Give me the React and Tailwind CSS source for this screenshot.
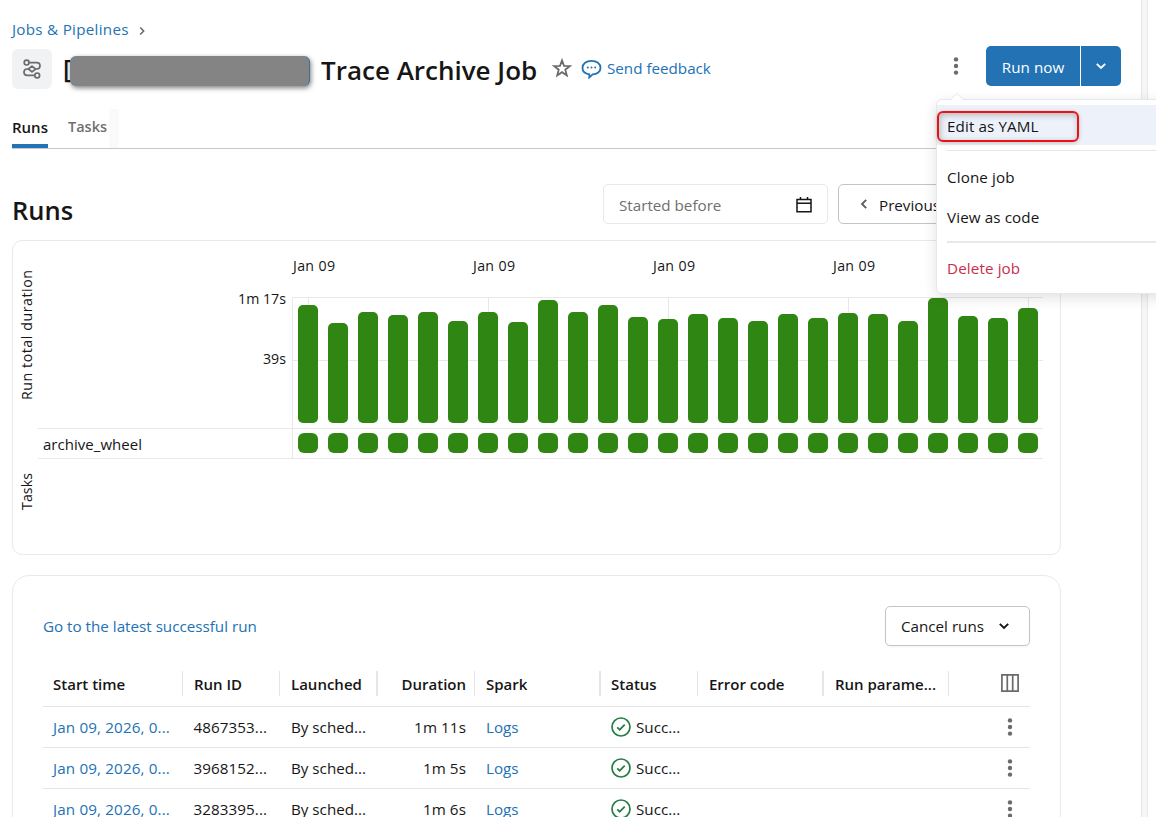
import React from "react";

const durations = [
  118, 100, 111, 108, 111, 102, 111, 101, 123, 111, 118, 106, 104, 109, 105,
  102, 109, 105, 110, 109, 102, 125, 107, 105, 115,
];

const runs = [
  { start: "Jan 09, 2026, 0...", id: "4867353...", duration: "1m 11s" },
  { start: "Jan 09, 2026, 0...", id: "3968152...", duration: "1m 5s" },
  { start: "Jan 09, 2026, 0...", id: "3283395...", duration: "1m 6s" },
];

const columns =
  "grid grid-cols-[140px_97px_98px_97px_126px_97px_126px_125px_81px]";

const Kebab = ({ className }) => (
  <svg className={className} width="6" height="18" viewBox="0 0 6 18">
    <circle cx="3" cy="2.4" r="2.2" fill="currentColor" />
    <circle cx="3" cy="9" r="2.2" fill="currentColor" />
    <circle cx="3" cy="15.6" r="2.2" fill="currentColor" />
  </svg>
);

const Chevron = ({ className }) => (
  <svg className={className} width="12" height="8" viewBox="0 0 12 8" fill="none">
    <path d="M1.8 1.8 6 6l4.2-4.2" stroke="currentColor" strokeWidth="1.9" />
  </svg>
);

const JobIcon = () => (
  <svg width="20" height="20" viewBox="0 0 20 20" fill="none" stroke="#6b6b6b" strokeWidth="1.7">
    <circle cx="4.6" cy="3.6" r="2.4" />
    <path d="M7 3.600h7.800a3.200 3.200 0 0 1 3.200 3.200 3.200 3.200 0 0 1-3.200 3.200h-1.400" />
    <path d="m10 7.200 3.600 2.800-3.600 2.800L6.400 10z" strokeLinejoin="round" />
    <path d="M6.600 10H5.200A3.200 3.200 0 0 0 2 13.200a3.200 3.200 0 0 0 3.200 3.200h7.600" />
    <circle cx="15.2" cy="16.4" r="2.4" />
  </svg>
);

const Header = () => (
  <header className="flex h-10 mt-[9px]">
    <div className="w-10 h-10 flex items-center justify-center rounded-md bg-[#f1f2f4]">
      <JobIcon />
    </div>
    <h1 className="ml-[11px] flex items-center whitespace-nowrap text-[26px] font-semibold text-[#161616]">
      <span className="w-[7px] text-[25px]">[</span>
      <span className="w-60 h-[30px] mt-[3px] rounded-[6px] bg-[#848484] border-r border-[#3d6d99] shadow-[1px_2px_5px_rgba(0,0,0,0.5)] z-10" />
      <span className="ml-[11px] mt-0.5 w-[217px]">Trace Archive Job</span>
    </h1>
    <svg className="ml-[14px] mt-[9px]" width="20" height="20" viewBox="0 0 20 20" fill="none">
      <path
        d="m10 2.400 2 5.400 5.800.3-4.500 3.600 1.500 5.700-4.800-3.200-4.800 3.200 1.500-5.700L2.200 8.100l5.800-.3z"
        stroke="#6b6b6b"
        strokeWidth="1.8"
      />
    </svg>
    <a className="ml-[9px] mt-[9px] flex h-6 items-center text-[#2272b4]">
      <svg className="-mt-[3px]" width="22" height="22" viewBox="0 0 22 22" fill="none">
        <path
          d="M8.300 16.300C4.200 15.600 1.500 13.200 1.500 9.900 1.500 5.700 5.300 2.900 10.500 2.900s9 2.800 9 7c0 3.700-3.300 6.400-7.800 6.500l-3.400 3z"
          stroke="currentColor"
          strokeWidth="1.8"
        />
        <circle cx="6.800" cy="9.500" r="1" fill="currentColor" />
        <circle cx="10.500" cy="9.500" r="1" fill="currentColor" />
        <circle cx="14.200" cy="9.500" r="1" fill="currentColor" />
      </svg>
      <span className="ml-1 -mt-[3px]">Send feedback</span>
    </a>
    <Kebab className="ml-auto mt-2 text-[#6b6b6b]" />
    <div className="ml-[27px] -mt-[3px] flex h-10 w-[135px] rounded-[5px] bg-[#2272b4] text-white">
      <button className="w-[95px] border-r border-white pt-0.5 tracking-[0.05px]">Run now</button>
      <button className="flex flex-1 items-center justify-center">
        <Chevron />
      </button>
    </div>
  </header>
);

const Tabs = () => (
  <nav className="mt-5 flex h-10 border-b border-[#c9c9c9] font-semibold">
    <a className="h-[39px] w-9 border-b-4 border-[#2272b4] pt-[7px] text-[15px] text-[#161616]">
      Runs
    </a>
    <a className="ml-5 w-[38px] pt-[7px] text-[14.500px] text-[#6f6f6f]">Tasks</a>
    <span className="ml-[3px] w-2.5 bg-[#fafafa]" />
  </nav>
);

const Toolbar = () => (
  <div className="mt-[35px] flex h-10">
    <h2 className="w-[591px] pt-1.5 text-[25.500px] leading-10 font-semibold text-[#161616]">
      Runs
    </h2>
    <div className="flex w-[225px] items-center justify-between rounded-[5px] border border-[#e8e9ee] pl-[15px] pr-[14px] text-[#6f6f6f]">
      <span className="pt-0.5">Started before</span>
      <svg className="mt-0.5" width="18" height="18" viewBox="0 0 18 18" fill="none" stroke="#161616" strokeWidth="1.5">
        <path d="M2 3.500h14v12.200H2zM2 7.300h14M5.500 1v3M12.500 1v3" />
      </svg>
    </div>
    <button className="ml-2.5 flex w-[140px] items-center rounded-[5px] border border-[#c4c4c4] pl-[18px] text-[#161616]">
      <Chevron className="ml-px rotate-90 text-[#5f5f5f]" />
      <span className="ml-[9px] pt-0.5">Previous</span>
    </button>
  </div>
);

const RunChart = () => (
  <section className="mt-4 flex h-[315px] w-[1049px] rounded-[10px] border border-[#e8e9ee]">
    <svg width="1047" height="313" viewBox="13 241 1047 313" fill="#161616" fontSize="14.2">
      <g stroke="#e8e8e8" fill="none">
        <path d="M292.500 458V297.500H1043M292 360.500h751M38 428.500h1005M38 458.500h1005" />
        {[308, 488, 668, 848, 1028].map((x) => (
          <path key={x} d={`M${x + 0.5} 297V423`} />
        ))}
      </g>
      {[314, 494, 674, 854].map((x) => (
        <text key={x} x={x} y="271" textAnchor="middle" textLength="42">
          Jan 09
        </text>
      ))}
      <text x="286" y="304" textAnchor="end" textLength="48">1m 17s</text>
      <text x="286" y="364" textAnchor="end" textLength="23">39s</text>
      <text x="43" y="450" fontSize="15" textLength="99">archive_wheel</text>
      <text transform="translate(32 400) rotate(-90)" textLength="130">Run total duration</text>
      <text transform="translate(32 510) rotate(-90)" textLength="37">Tasks</text>
      {durations.map((h, i) => (
        <g key={i} fill="#308613">
          <rect x={298 + i * 30} y={423 - h} width="20" height={h} rx="5" />
          <rect x={298 + i * 30} y="433" width="20" height="20" rx="6" />
        </g>
      ))}
    </svg>
  </section>
);

const HeadCell = ({ children, className = "border-r pl-[11px]" }) => (
  <div className={`h-[25px] border-[#e4e5e8] leading-[26px] ${className}`}>
    {children}
  </div>
);

const RunTable = () => (
  <section className="mt-5 h-[300px] w-[1049px] rounded-[17px] border border-[#e8e9ee] px-[30px] pt-[30px]">
    <div className="flex h-10 items-center justify-between">
      <a className="text-[#2272b4]">Go to the latest successful run</a>
      <button className="flex h-10 w-[145px] items-center rounded-[5px] border border-[#c4c4c4] pl-[15px] shadow-xs">
        <span className="w-[97px] text-left">Cancel runs</span>
        <Chevron />
      </button>
    </div>
    <div className={`${columns} mt-[25px] h-9 border-b border-[#e4e5ea] text-[15px] font-semibold whitespace-nowrap`}>
      <HeadCell className="border-r pl-2.5">Start time</HeadCell>
      <HeadCell>Run ID</HeadCell>
      <HeadCell className="border-r-2 pl-[11px]">Launched</HeadCell>
      <HeadCell className="border-r pr-2 text-right">Duration</HeadCell>
      <HeadCell className="border-r-2 pl-[11px]">Spark</HeadCell>
      <HeadCell className="border-r pl-2.5">Status</HeadCell>
      <HeadCell className="border-r-2 pl-[11px]">Error code</HeadCell>
      <HeadCell>Run parame...</HeadCell>
      <svg className="ml-[52px] mt-[3px]" width="18" height="18" viewBox="0 0 18 18" fill="none" stroke="#6b6b6b" strokeWidth="1.7">
        <path d="M.9.9h16.200v16.200H.9zM6.300 1v16M11.700 1v16" />
      </svg>
    </div>
    {runs.map((run) => (
      <div key={run.id} className={`${columns} h-[41px] border-b border-[#e4e5ea] leading-10 whitespace-nowrap`}>
        <a className="pl-2.5 tracking-[0.15px] text-[#2272b4]">{run.start}</a>
        <span className="pl-[10.500px] tracking-[0.08px]">{run.id}</span>
        <span className="pl-[11px]">By sched...</span>
        <span className="pr-[9px] text-right tracking-[0.1px]">{run.duration}</span>
        <a className="pl-[11px] text-[#2272b4]">Logs</a>
        <span className="flex items-start pl-2.5">
          <svg className="mt-2.5" width="20" height="20" viewBox="0 0 20 20" fill="none" stroke="#277c43" strokeWidth="1.7">
            <circle cx="10" cy="10" r="9" />
            <path d="m6.200 10.300 2.500 2.400 5-5" />
          </svg>
          <span className="ml-[5px]">Succ...</span>
        </span>
        <span />
        <span />
        <Kebab className="ml-[58px] mt-[11px] text-[#6b6b6b]" />
      </div>
    ))}
  </section>
);

const JobMenu = () => (
  <div className="absolute top-[99px] left-[936px] z-20 h-[195px] w-[240px] rounded-md border border-[#e6e7ea] bg-white pt-[5px] text-[#161616] tracking-[0.12px] shadow-[0_4px_14px_rgba(0,0,0,0.12)]">
    <svg className="absolute -top-[7px] left-3" width="16" height="8" viewBox="0 0 16 8">
      <path d="M1 7.500 7 1.300q1-1 2 0L15 7.500" fill="#fff" stroke="#e6e7ea" />
    </svg>
    <div className="relative h-10 bg-[#edf2fa] pl-2.5 leading-[43px]">
      Edit as YAML
      <span className="absolute top-1.5 left-0 h-[31px] w-[142px] rounded-[6px] border-2 border-[#ee1111] shadow-[inset_1px_2px_6px_rgba(0,0,0,0.25),0_1px_4px_rgba(0,0,0,0.2)]" />
    </div>
    <div className="mt-[5px] ml-2.5 h-px bg-[#e6e6e6]" />
    <div className="mt-1.5 h-10 pl-2.5 leading-[41px]">Clone job</div>
    <div className="h-10 pl-2.5 leading-[41px]">View as code</div>
    <div className="mt-1 ml-2.5 h-0.5 bg-[#e8e8e8]" />
    <div className="mt-[5px] h-10 pl-2.5 leading-[41px] text-[#c82d4c]">Delete job</div>
  </div>
);

const App = () => {
  return (
    <div className="relative flex h-[817px] w-[1156px] overflow-hidden bg-white font-['Open_Sans',sans-serif] text-[15.200px] text-[#161616]">
      <main className="w-[1141px] shrink-0 pl-3 pr-5">
        <div className="flex h-10 items-center pt-[19px] text-[#2272b4]">
          <span className="tracking-[0.28px]">Jobs &amp; Pipelines</span>
          <Chevron className="ml-2 mt-0.5 w-2.5 -rotate-90 text-[#6b6b6b]" />
        </div>
        <Header />
        <Tabs />
        <Toolbar />
        <RunChart />
        <RunTable />
      </main>
      <div className="w-[7px] shrink-0 border-x border-[#e6e6e6] bg-[#f6f6f6]" />
      <JobMenu />
    </div>
  );
};

export default App;
